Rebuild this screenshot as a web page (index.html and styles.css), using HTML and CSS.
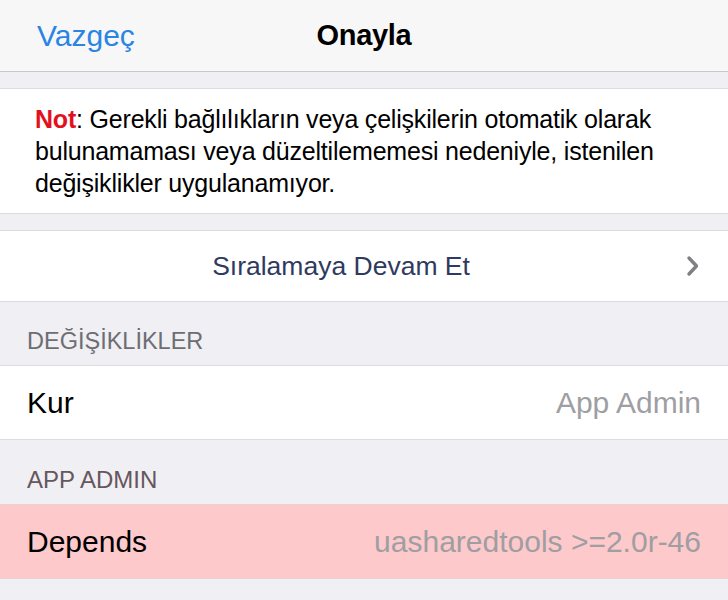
FILE: index.html
```html
<!DOCTYPE html>
<html lang="tr">
<head>
  <meta charset="UTF-8">
  <meta name="viewport" content="width=device-width, initial-scale=1.0">
  <title>Onayla</title>
  <link rel="stylesheet" href="styles.css">
</head>
<body>
  <header class="navbar">
    <a href="#" class="nav-cancel">Vazgeç</a>
    <div class="nav-title">Onayla</div>
    <span class="nav-spacer"></span>
  </header>

  <main>
    <section class="group">
      <p class="note"><span class="note-label">Not</span>: Gerekli bağlılıkların veya çelişkilerin otomatik olarak bulunamaması veya düzeltilememesi nedeniyle, istenilen değişiklikler uygulanamıyor.</p>
    </section>

    <section class="group">
      <a href="#" class="cell cell-link">
        <span class="link-text">Sıralamaya Devam Et</span>
        <svg class="chevron" width="14" height="22" viewBox="0 0 14 22">
          <path d="M3 3 L10.5 11 L3 19" fill="none" stroke="#808084" stroke-width="3.4" stroke-linecap="round" stroke-linejoin="round"/>
        </svg>
      </a>
    </section>

    <h2 class="section-title">DEĞİŞİKLİKLER</h2>
    <section class="group">
      <div class="cell">
        <span class="cell-label">Kur</span>
        <span class="cell-value">App Admin</span>
      </div>
    </section>

    <h2 class="section-title section-title-warn">APP ADMIN</h2>
    <section class="group group-error">
      <div class="cell">
        <span class="cell-label">Depends</span>
        <span class="cell-value">uasharedtools &gt;=2.0r-46</span>
      </div>
    </section>
  </main>
</body>
</html>
```

FILE: styles.css
```css
:root {
  --bg-color: #efeff4;
  --nav-bg: #f7f7f8;
  --line-color: #c8c7cc;
  --blue: #2a85e2;
  --red: #e3101d;
  --muted: #9e9ea3;
}
* { box-sizing: border-box; margin: 0; padding: 0; }
body { background: var(--bg-color); color: #000; font-family: 'Liberation Sans', Arial, sans-serif; width: 728px; height: 600px; overflow: hidden; }

.navbar { height: 72px; background: var(--nav-bg); border-bottom: 1px solid var(--line-color); display: flex; align-items: center; justify-content: space-between; padding: 0 37px; }
.nav-cancel { color: var(--blue); text-decoration: none; font-size: 30px; width: 120px; }
.nav-title { font-size: 29px; font-weight: 700; letter-spacing: -0.3px; }
.nav-spacer { width: 120px; }

main { padding-top: 16px; }
.group { background: #fff; border-top: 1px solid #dcdce0; border-bottom: 1px solid #dcdce0; margin-bottom: 16px; }

.note { font-size: 25px; line-height: 32px; padding: 14px 20px 14px 35px; letter-spacing: -0.2px; }
.note-label { color: var(--red); font-weight: 700; }

.cell { height: 73px; display: flex; align-items: center; justify-content: space-between; padding: 0 27px; text-decoration: none; }
.cell-link { position: relative; justify-content: center; height: 70px; }
.link-text { color: #2f3a60; font-size: 26.5px; margin-left: -46px; }
.chevron { position: absolute; right: 28px; top: 24px; }

.cell-label { font-size: 30px; }
.cell-value { font-size: 30px; color: var(--muted); }

.section-title { font-size: 23.5px; font-weight: 400; color: #6d6d72; padding: 26px 27px 10px; margin-top: -16px; }
.section-title-warn { color: #67565d; font-size: 24px; }

.group-error { background: #fdc9ca; border-color: #e6d3d6; }
```
